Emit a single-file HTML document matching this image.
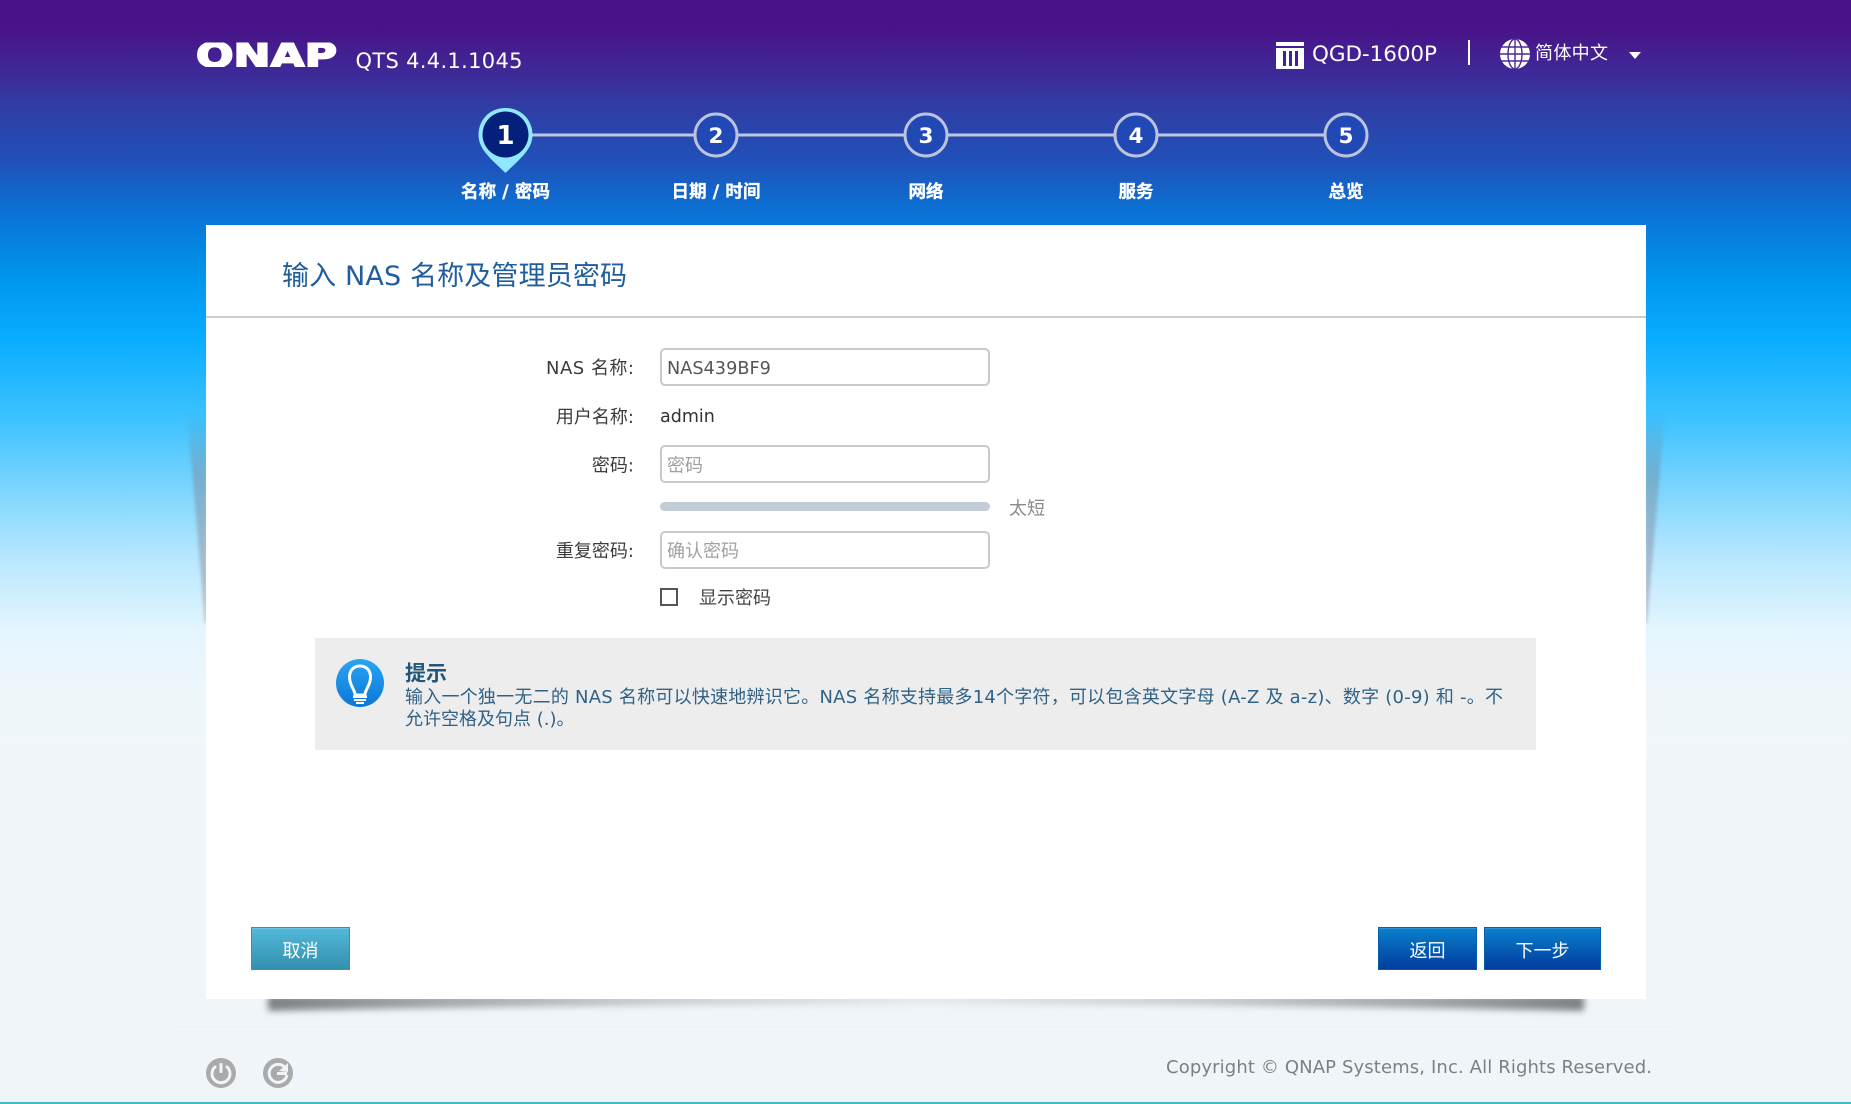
<!DOCTYPE html>
<html lang="zh-CN"><head><meta charset="utf-8"><title>QNAP QTS</title>
<style>
html,body{margin:0;padding:0;width:1851px;height:1104px;overflow:hidden}
body{position:relative;background:linear-gradient(180deg,#4a1287 0,#4a1287 25px,#3f2896 70px,#2f3fa6 110px,#2050b8 160px,#0a74d6 215px,#0098ee 282px,#09adff 340px,#3fc3ff 422px,#80d6fd 493px,#bbe8ff 563px,#e5f6fe 634px,#eff6fa 704px,#f0f5f9 780px,#f0f5f9 1104px);font-family:"DejaVu Sans","Noto Sans CJK SC",sans-serif}
div{position:absolute;box-sizing:border-box}
.card{left:206px;top:225px;width:1440px;height:774px;background:#fff}
.hr{left:206px;top:316px;width:1440px;height:2px;background:#c9ced2}
.inp{left:660px;width:330px;height:38px;background:#fff;border:2px solid #c9c9c9;border-radius:5px}
.bar{left:660px;top:502px;width:330px;height:9px;background:#c2cdd7;border-radius:5px}
.cb{left:660px;top:588px;width:18px;height:18px;border:2px solid #555;background:#fff}
.tip{left:315px;top:638px;width:1221px;height:112px;background:#ededed}
.btn{top:927px;height:43px}
.c{left:251px;width:99px;background:linear-gradient(#52b8da,#3490ae);border:1px solid #3c8ea9;box-shadow:inset 0 1px 0 #6ec5e2}
.b1{left:1378px;width:99px}.b2{left:1484px;width:117px}
.b1,.b2{background:linear-gradient(#0a80cc,#013c9e);border:1px solid #0560a8;box-shadow:inset 0 1px 0 #2a93d6}
.fl{left:175px;top:1029px;width:1500px;height:1px;background:#f6f9fb}
.bl{left:0;top:1102px;width:1851px;height:2px;background:#42bcc4}
svg{position:absolute;left:0;top:0}
text{font-family:"DejaVu Sans","Noto Sans CJK SC",sans-serif}
.l{font-size:18px;fill:#3c3c3c;text-anchor:end}
.st{font-size:17.500px;font-weight:700;fill:#fff;stroke:#fff;stroke-width:.35;text-anchor:middle}
.n{font-size:21.5px;font-weight:700;fill:#fff;text-anchor:middle}
.w{font-size:18px;fill:#fff;text-anchor:middle}
.h{font-size:18px;fill:#2f6286}
.p{font-size:18px;fill:#a0a0a0}
</style></head><body>
<svg width="1851" height="1104" viewBox="0 0 1851 1104" style="z-index:0">
<defs>
<filter id="b2" x="-10%" y="-200%" width="120%" height="500%"><feGaussianBlur stdDeviation="3.500"/></filter>
<filter id="b1" x="-100%" y="-10%" width="300%" height="120%"><feGaussianBlur stdDeviation="1.500"/></filter>
<linearGradient id="sh" x1="0" x2="1" y1="0" y2="0"><stop offset="0" stop-color="#7c8186"/><stop offset=".1" stop-color="#9a9fa4"/><stop offset=".3" stop-color="#c8cdd2"/><stop offset=".5" stop-color="#e4e8ec"/><stop offset=".7" stop-color="#c8cdd2"/><stop offset=".9" stop-color="#9a9fa4"/><stop offset="1" stop-color="#7c8186"/></linearGradient>
<linearGradient id="sd" x1="0" x2="0" y1="0" y2="1"><stop offset="0" stop-color="#667" stop-opacity="0"/><stop offset=".3" stop-color="#778" stop-opacity=".38"/><stop offset="1" stop-color="#99a" stop-opacity=".55"/></linearGradient>
<clipPath id="lg"><rect x="190" y="42.500" width="155" height="24.500"/></clipPath>
</defs>
<polygon points="187,412 207,412 207,623 205,623" fill="url(#sd)" filter="url(#b1)"/>
<polygon points="1665,412 1645,412 1645,623 1647,623" fill="url(#sd)" filter="url(#b1)"/>
<path d="M268 995 L1584 995 L1584 1011 Q926 998 268 1011 Z" fill="url(#sh)" filter="url(#b2)"/>
</svg>
<div class="card"></div>
<div class="hr"></div>
<div class="inp" style="top:348px"></div>
<div class="inp" style="top:445px"></div>
<div class="bar"></div>
<div class="inp" style="top:531px"></div>
<div class="cb"></div>
<div class="tip"></div>
<div class="btn c"></div><div class="btn b1"></div><div class="btn b2"></div>
<div class="fl"></div><div class="bl"></div>
<svg width="1851" height="1104" viewBox="0 0 1851 1104" style="z-index:2">
<!-- header -->
<g clip-path="url(#lg)"><text x="196" y="67" font-size="34" font-weight="700" fill="#fff" stroke="#fff" stroke-width="1.800" textLength="141" lengthAdjust="spacingAndGlyphs">QNAP</text></g>
<text x="355.500" y="68" font-size="21" fill="#fff" textLength="167">QTS 4.4.1.1045</text>
<g fill="#fff"><rect x="1276" y="42" width="28" height="4"/><rect x="1276" y="48" width="28" height="21"/></g>
<g fill="#43209a"><rect x="1283" y="51" width="3" height="15"/><rect x="1289" y="51" width="3" height="15"/><rect x="1295" y="51" width="3" height="15"/></g>
<text x="1312" y="61" font-size="21.5" fill="#fff" textLength="125">QGD-1600P</text>
<rect x="1468" y="40" width="2" height="25" fill="#fff"/>
<circle cx="1515" cy="54" r="15" fill="#fff"/>
<g fill="none" stroke="#4a2a9c" stroke-width="1.400"><ellipse cx="1515" cy="54" rx="7" ry="15"/><path d="M1515 39V69M1501 47H1529M1500 54H1530M1501 61H1529"/></g>
<text x="1535" y="59" font-size="18" fill="#fff" textLength="73">简体中文</text>
<polygon points="1629,52 1641,52 1635,59" fill="#fff"/>
<!-- steps -->
<rect x="530" y="133.500" width="820" height="3" fill="#bfc6df"/>
<path d="M505.500 108C489.500 108 478.500 120 478.500 135C478.500 150 492.500 160 505.500 173C518.500 160 532.500 150 532.500 135C532.500 120 521.500 108 505.500 108Z" fill="#8fe8ff"/>
<circle cx="505.500" cy="134.500" r="23" fill="#04207a"/>
<text x="505.500" y="144" font-size="26" font-weight="700" fill="#fff" text-anchor="middle">1</text>
<g fill="#2149b5" stroke="#bcc3dc" stroke-width="3">
<circle cx="716" cy="135" r="21"/><circle cx="926" cy="135" r="21"/><circle cx="1136" cy="135" r="21"/><circle cx="1346" cy="135" r="21"/></g>
<text class="n" x="716" y="143">2</text><text class="n" x="926" y="143">3</text><text class="n" x="1136" y="143">4</text><text class="n" x="1346" y="143">5</text>
<text class="st" x="505.500" y="197.500" textLength="89">名称 / 密码</text><text class="st" x="716" y="197.500" textLength="89">日期 / 时间</text><text class="st" x="926" y="197.500">网络</text><text class="st" x="1136" y="197.500">服务</text><text class="st" x="1346" y="197.500">总览</text>
<!-- title -->
<text x="282" y="285" font-size="27" fill="#1f5d9e" textLength="345">输入 NAS 名称及管理员密码</text>
<!-- form -->
<text class="l" x="634" y="374" textLength="88">NAS 名称:</text>
<text class="l" x="634" y="423">用户名称:</text>
<text class="l" x="634" y="471.500">密码:</text>
<text class="l" x="634" y="557">重复密码:</text>
<text x="667" y="374" font-size="17.700" fill="#555">NAS439BF9</text>
<text x="660" y="422" font-size="17.500" fill="#333">admin</text>
<text class="p" x="667" y="471.500">密码</text>
<text x="1009" y="514.500" font-size="18" fill="#8a8a8a">太短</text>
<text class="p" x="667" y="557">确认密码</text>
<text x="699" y="604" font-size="18" fill="#444">显示密码</text>
<!-- tip -->
<defs><linearGradient id="bg" x1="0" x2="0" y1="0" y2="1"><stop offset="0" stop-color="#2aa4f4"/><stop offset="1" stop-color="#0b78d8"/></linearGradient></defs>
<circle cx="360" cy="683" r="24" fill="url(#bg)"/>
<path d="M355 695C355 689 349.500 686 349.500 677C349.500 670 354 666 360 666C366 666 370.500 670 370.500 677C370.500 686 365 689 365 695Z" fill="none" stroke="#fff" stroke-width="3"/>
<rect x="353" y="696" width="14" height="2" fill="#fff"/><rect x="354" y="699" width="12" height="2" fill="#fff"/><rect x="356" y="702" width="8" height="2" fill="#fff"/>
<text x="405" y="680.500" font-size="21" font-weight="700" fill="#24567c">提示</text>
<text class="h" x="405" y="703" textLength="1098">输入一个独一无二的 NAS 名称可以快速地辨识它。NAS 名称支持最多14个字符，可以包含英文字母 (A-Z 及 a-z)、数字 (0-9) 和 -。不</text>
<text class="h" x="405" y="725">允许空格及句点 (.)。</text>
<!-- buttons -->
<text class="w" x="300.500" y="957">取消</text>
<text class="w" x="1427.500" y="957">返回</text>
<text class="w" x="1542.500" y="957">下一步</text>
<!-- footer -->
<circle cx="221" cy="1073" r="15" fill="#aaa"/>
<path d="M215 1067A9 9 0 1 0 227 1067" fill="none" stroke="#f0f5f9" stroke-width="3" stroke-linecap="round"/>
<rect x="219.500" y="1063" width="3" height="10" rx="1" fill="#f0f5f9"/>
<circle cx="278" cy="1073" r="15" fill="#aaa"/>
<path d="M285 1067.500A9 9 0 1 0 287 1075" fill="none" stroke="#f0f5f9" stroke-width="3"/>
<polygon points="288,1063 288,1072 279,1071" fill="#f0f5f9"/>
<rect x="277" y="1072" width="10" height="3" fill="#f0f5f9"/>
<text x="1166" y="1073" font-size="18" fill="#7f7f7f" textLength="486">Copyright © QNAP Systems, Inc. All Rights Reserved.</text>
</svg>
</body></html>
